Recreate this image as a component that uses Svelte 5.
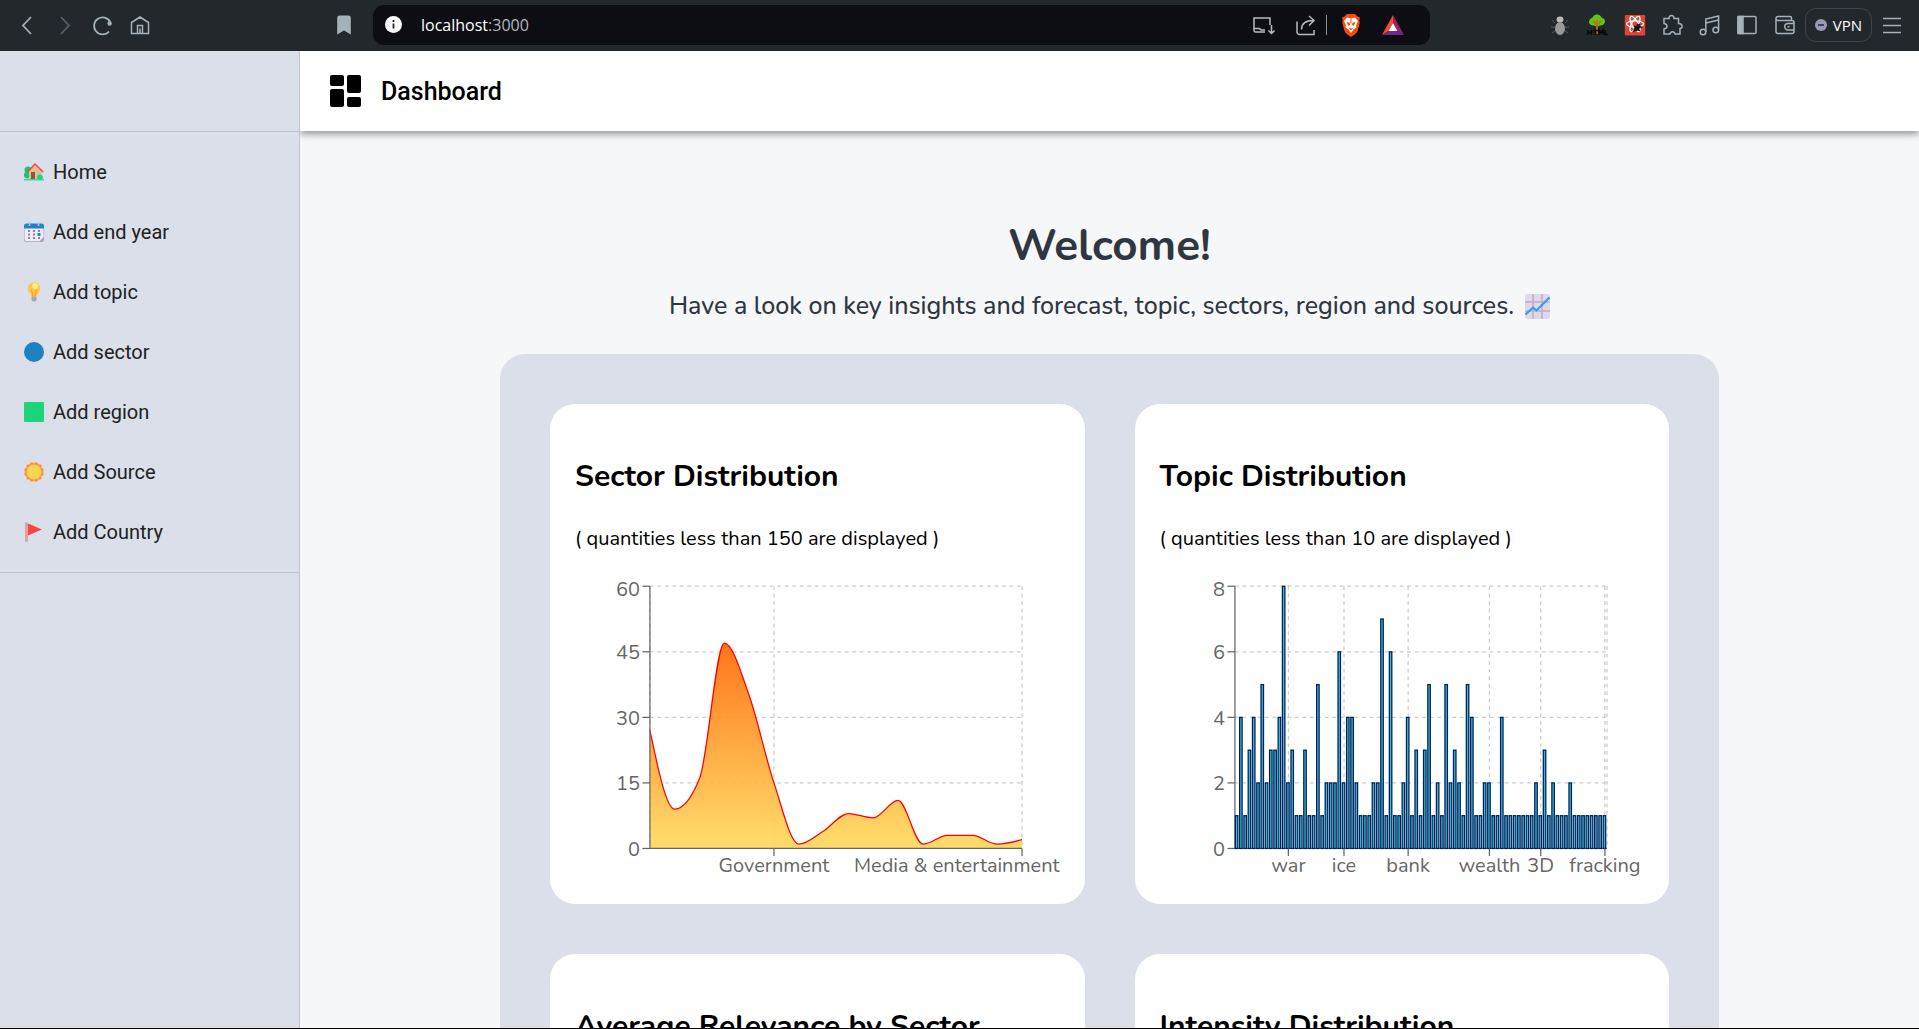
<script>
  const left = 60;
  const top = 5;
  const width = 298;
  const height = 210;
  const bottom = top + height;

  const sectors = [27, 9, 16, 47, 35, 15, 1, 4, 8, 7, 11, 1, 3, 3, 1, 2];
  const topics = [
    1, 4, 1, 3, 4, 2, 5, 2, 3, 3, 4, 8, 2, 3, 1, 1, 3, 1, 1, 5, 1, 2, 2, 2, 6,
    2, 4, 4, 2, 1, 1, 1, 2, 2, 7, 1, 6, 1, 1, 2, 4, 1, 3, 1, 3, 5, 1, 2, 1, 5,
    2, 3, 2, 1, 5, 4, 1, 1, 2, 2, 1, 1, 4, 1, 1, 1, 1, 1, 1, 1, 2, 1, 3, 1, 2,
    1, 1, 1, 2, 1, 1, 1, 1, 1, 1, 1, 1
  ];
  const topicTicks = [
    [12, 'war'], [25, 'ice'], [40, 'bank'], [59, 'wealth'], [71, '3D'], [86, 'fracking']
  ];

  const yFor = (value, max) => bottom - (value / max) * height;

  // Monotone cubic interpolation through the points, as an SVG path.
  function monotone(points) {
    const n = points.length;
    const slopes = points.slice(1).map((p, i) => (p[1] - points[i][1]) / (p[0] - points[i][0]));
    const m = points.map((_, i) => {
      if (i === 0 || i === n - 1) return 0;
      const a = slopes[i - 1];
      const b = slopes[i];
      if (a * b <= 0) return 0;
      return Math.sign(a) * Math.min(Math.abs(a), Math.abs(b), Math.abs(a + b) / 4) * 2;
    });
    m[0] = (3 * slopes[0] - m[1]) / 2;
    m[n - 1] = (3 * slopes[n - 2] - m[n - 2]) / 2;
    let d = `M${points[0].join(',')}`;
    for (let i = 1; i < n; i++) {
      const [x0, y0] = points[i - 1];
      const [x1, y1] = points[i];
      const dx = (x1 - x0) / 3;
      d += `C${x0 + dx},${y0 + dx * m[i - 1]},${x1 - dx},${y1 - dx * m[i]},${x1},${y1}`;
    }
    return d;
  }

  const line = monotone(
    sectors.map((v, i) => [left + (i * width) / (sectors.length - 1), yFor(v, 60)])
  );
  const area = `${line}L${left + width},${bottom}L${left},${bottom}Z`;
  const band = width / topics.length;
  const governmentX = left + width / 3;

  const items = [
    ['home', 'Home'],
    ['calendar', 'Add end year'],
    ['bulb', 'Add topic'],
    ['circle', 'Add sector'],
    ['square', 'Add region'],
    ['sun', 'Add Source'],
    ['flag', 'Add Country']
  ];
  const rays = Array.from({ length: 12 }, (_, i) => {
    const a = (i * Math.PI) / 6 + Math.PI / 12;
    return [10 + 8 * Math.cos(a), 10 + 8 * Math.sin(a)];
  });
</script>

{#snippet yAxis(max, ticks)}
  {#each ticks as t, i}
    <line class="axis" x1={left - 6} x2={left} y1={yFor(t, max)} y2={yFor(t, max)} />
    <text class="label" x="52" y={yFor(t, max) + (i === 0 ? 8 : 6)} text-anchor="end">{t}</text>
  {/each}
  <line class="axis" x1={left} x2={left} y1={top} y2={bottom} />
{/snippet}

{#snippet gridRows(max, ticks)}
  {#each ticks as t}
    <line class="grid" x1={left} x2={left + width} y1={yFor(t, max)} y2={yFor(t, max)} />
  {/each}
{/snippet}

<div class="window">
  <div class="browser">
    <div class="nav">
      <button aria-label="Back"><svg viewBox="0 0 24 24" class="stroke wide"><path d="M16 4 8 12.500l8 8.500" /></svg></button>
      <button aria-label="Forward" class="dim"><svg viewBox="0 0 24 24" class="stroke wide"><path d="m8 4 8 8.500L8 21" /></svg></button>
      <button aria-label="Reload"><svg viewBox="0 0 24 24" class="stroke wide"><path d="M18 18.500A8.500 8.500 0 1 1 19.200 9" /><circle cx="18.600" cy="10.500" r="2.200" class="solid" /></svg></button>
      <button aria-label="Home page"><svg viewBox="0 0 24 24" class="stroke"><path d="M2.500 20.500V9.500L11 4l8.500 5.500v11zM8.500 20.500v-8h5v8M11 20.500v-5" /></svg></button>
      <button aria-label="Bookmark" class="push"><svg viewBox="0 0 24 24"><path fill="#a3b2bb" d="M7.500 2.500h9A2.300 2.300 0 0 1 18.800 4.800V21.500L12 17.500 5.200 21.500V4.800A2.300 2.300 0 0 1 7.500 2.500Z" /></svg></button>
    </div>
    <div class="address">
      <svg class="info" viewBox="0 0 17 17"><circle cx="8.500" cy="8.500" r="8.500" fill="#fff" /><path d="M8.500 7.500v5M8.500 4v2" stroke="#222" stroke-width="1.800" /></svg>
      <span class="url">localhost<span>:3000</span></span>
      <button aria-label="Install" class="grey"><svg viewBox="0 0 24 24" class="stroke"><path d="M13 19H3.500a1.500 1.500 0 0 1-1.500-1.500V5h16v7M2 15.500h5.500l1.500 1.500h4M19.500 12v8M16.500 17.500l3 3 3-3" /></svg></button>
      <button aria-label="Share" class="grey"><svg viewBox="0 0 24 24" class="stroke"><path d="M3 8.500V19a2.500 2.500 0 0 0 2.500 2.500H20V17M7.500 16.500C7.500 11 11 7.500 19.500 7.500M15 3l5 4.500-5 5" /></svg></button>
      <i class="bar"></i>
      <button aria-label="Brave Shields"><svg viewBox="0 0 24 24"><path fill="#fb4a05" d="M8 1h8l2.500 2.500 2.500 1-.8 3 .6 2-2.300 8.500c-.5 2-3.500 4-6.500 6-3-2-6-4-6.500-6L3.200 9.500l.6-2-.8-3 2.500-1z" /><path fill="#fff" d="m8 4.500 4 1 4-1 3 3.500-1.800 4 .3 2.500-3 2L12 20l-2.500-3.500-3-2 .3-2.500L5 8z" /><path fill="#fb4a05" d="m7.500 9 3 .8.500 2.200-1.800.8zM16.500 9l-3 .8-.5 2.200 1.800.8zM9.500 14.500l2.500 1 2.500-1-2.500 3zM11.500 5.500h1v5h-1z" /></svg></button>
      <button aria-label="Rewards" class="last"><svg viewBox="0 0 24 24"><path fill="#ff4a2a" d="M12 2 1 22l6.500-4L12 10z" /><path fill="#9e1f63" d="m12 2 11 20-6.500-4L12 10z" /><path fill="#662d91" d="M1 22h22l-6.500-4h-9z" /><path fill="#fff" d="m12 10 4.500 8h-9z" /></svg></button>
    </div>
    <div class="tools">
      <div class="extensions">
        <button aria-label="Bug"><svg viewBox="0 0 24 24"><path d="M4 7l3 3M20 7l-3 3M3 14h4M21 14h-4M4 20l3-2M20 20l-3-2" stroke="#555c60" /><ellipse cx="12" cy="6.500" rx="3.500" ry="3" fill="#bbb" /><ellipse cx="12" cy="15.500" rx="5" ry="6.500" fill="#999" /></svg></button>
        <button aria-label="HTML Tree"><svg viewBox="0 0 24 24"><path fill="#63c414" d="M12 1.500c2.500 0 4 1.500 4.500 3 2 .5 4 2.500 3.500 4.500s-3 4-5 3.500c-2 1-4 1-6 0-2 .5-5-1.500-5-3.500s1.500-4 3.500-4.500C8 3 9.500 1.500 12 1.500Z" /><path d="M12 21V7M12 12 8 8M12 12l4-4" stroke="#b5741f" stroke-width="1.800" fill="none" /><path d="M3 17v5M6.500 17v5M3 19.500h3.500M8 17.500h5M10.500 17v5M14 22v-5l2 3 2-3v5M20 17v4.500h3" stroke="#080808" stroke-width="1.600" fill="none" /></svg></button>
        <button aria-label="React tools"><svg viewBox="0 0 24 24"><rect x="1.800" y="2" width="20.400" height="20.400" rx="1" fill="#df4537" /><g fill="none" stroke="#fff" stroke-width="1.300"><ellipse cx="12" cy="11" rx="8.500" ry="3.200" /><ellipse cx="12" cy="11" rx="8.500" ry="3.200" transform="rotate(60 12 11)" /><ellipse cx="12" cy="11" rx="8.500" ry="3.200" transform="rotate(120 12 11)" /></g><path d="m10 19 7-8M11 13l6 5M14 11l5 4" stroke="#1b1b1b" stroke-width="1.600" /><ellipse cx="14" cy="15" rx="2.500" ry="3.500" transform="rotate(40 14 15)" fill="#1b1b1b" /></svg></button>
        <button aria-label="Extensions"><svg viewBox="0 0 24 24" class="stroke"><path d="M4 5.500h5C8.500 1.500 14.500 1.500 14 5.500h4.500v5c4.500 0 4.500 5 1.500 5v5.500h-5c-.5-3-4.500-3-5 0H4v-5c4-.5 4-5 0-5.500z" /></svg></button>
        <button aria-label="Media"><svg viewBox="0 0 24 24" class="stroke"><circle cx="5" cy="19" r="2.800" /><circle cx="17.800" cy="17" r="2.800" /><path d="M7.800 19V6L20.600 3v14M7.800 10l12.800-3" /></svg></button>
        <button aria-label="Sidebar"><svg viewBox="0 0 24 24" class="stroke"><rect x="3" y="3.500" width="18" height="17" rx="1" /><path fill="#a3b2bb" d="M3 3.500h5v17H3z" /></svg></button>
        <button aria-label="Wallet"><svg viewBox="0 0 24 24" class="stroke"><path d="M18.500 7.500V5A1.500 1.500 0 0 0 17 3.500H5a2 2 0 0 0 0 4h14a2 2 0 0 1 2 2v9a2 2 0 0 1-2 2H5a2 2 0 0 1-2-2v-13M21 10.500h-6a3.200 3.200 0 0 0 0 6.500h6M14.500 13.800h2" /></svg></button>
      </div>
      <button class="vpn"><svg viewBox="0 0 12 12"><circle cx="6" cy="6" r="6" fill="#9a99b3" /><path d="M3 6h6" stroke="#23272b" stroke-width="1.500" /></svg>VPN</button>
      <button aria-label="Menu"><svg viewBox="0 0 24 24" class="stroke"><path d="M3 5.500h18M3 12.500h18M3 19.500h18" /></svg></button>
    </div>
  </div>

  <div class="app">
    <aside>
      <div class="brand"></div>
      <nav>
        {#each items as [icon, label]}
          <a href="#{icon}">
            <svg viewBox="0 0 20 20">
              {#if icon === 'home'}
                <circle cx="4" cy="8" r="3.500" fill="#18c673" /><circle cx="3.500" cy="13" r="3.500" fill="#18c673" />
                <path fill="#eebd7d" d="M5 9l6-6 7 6.500V18H5z" />
                <path fill="none" stroke="#f5454c" stroke-width="1.500" d="M3.500 10 11 2l8.200 8" />
                <path fill="#7f5a4d" d="M7 10h4v8H7z" /><path fill="#8ccbf5" d="M13 10h3.500v4H13z" />
                <circle cx="16" cy="15.500" r="2.800" fill="#18d36f" /><path fill="#35dba0" d="M0 17h20v1.500H0z" />
              {:else if icon === 'calendar'}
                <rect y="2" width="20" height="18" rx="2.500" fill="#aaa0b5" /><path fill="#f0ebf7" d="M.5 5h19v10l-4 4.200H3A2.500 2.500 0 0 1 .5 17z" />
                <path fill="#1b86cf" d="M0 6.500V4a2.500 2.500 0 0 1 2.500-2.500h15A2.500 2.500 0 0 1 20 4v2.500z" />
                <path stroke="#c9c4d4" stroke-width="1.500" d="M5.500 0v4M14.500 0v4" />
                <path stroke="#8c8399" stroke-width="2" stroke-dasharray="2 3" d="M4 9h12M4 12.500h7M4 16h12" /><path fill="#1b86cf" d="M13.500 11h3v3h-3z" />
              {:else if icon === 'bulb'}
                <path fill="#fbc64a" d="M10 .3a6 6 0 0 1 6.200 6.200c0 3.500-3 4.500-3.500 8.500H7.300C6.800 11 3.800 10 3.800 6.500A6 6 0 0 1 10 .3Z" />
                <circle cx="11" cy="4" r="3" fill="#fdf07a" /><path d="m7.500 8 1.500 7M12.500 8 11 15" stroke="#f39c3c" /><path fill="#aaa4b2" d="M7.500 15h5v3l-1.500 1.500H9L7.500 18z" />
              {:else if icon === 'circle'}
                <circle cx="10" cy="10" r="10" fill="#1c82c2" />
              {:else if icon === 'square'}
                <rect width="20" height="20" rx="1" fill="#1bd57a" />
              {:else if icon === 'sun'}
                {#each rays as [cx, cy]}<circle {cx} {cy} r="2" fill="#ff8f3f" />{/each}
                <circle cx="10" cy="10" r="8.500" fill="#ff8f3f" /><circle cx="10" cy="10" r="7.500" fill="#f9d44f" />
              {:else}
                <rect x="1" width="3" height="20" rx="1.500" fill="#e0a39c" /><path fill="#fb4545" d="M4 1.500 18 7.500 4 13.500z" />
              {/if}
            </svg>
            {label}
          </a>
        {/each}
      </nav>
    </aside>

    <div class="content">
      <header>
        <svg viewBox="0 0 31 32"><rect width="14" height="11" rx="2" /><rect y="14" width="14" height="18" rx="2" /><rect x="17" width="14" height="18" rx="2" /><rect x="17" y="22" width="14" height="10" rx="2" /></svg>
        <span>Dashboard</span>
      </header>
      <main>
        <h1>Welcome!</h1>
        <p class="lead">
          Have a look on key insights and forecast, topic, sectors, region and sources.
          <svg viewBox="0 0 25 25"><rect width="25" height="25" rx="3" fill="#ded8ea" /><path d="M8 0v25M17 0v25M0 8h25M0 17h25" stroke="#b9afc8" stroke-width="1.500" /><path d="m.5 20.500 7.500-7 3.500 3L24.500 3.500" fill="none" stroke="#2d9cea" stroke-width="2" /></svg>
        </p>

        <section class="panel">
          <article>
            <h2>Sector Distribution</h2>
            <p>( quantities less than 150 are displayed )</p>
            <svg class="chart" viewBox="0 0 388 250" role="img" aria-label="Sector distribution">
              <defs>
                <linearGradient id="heat" x1="0" y1="0" x2="0" y2="1">
                  <stop offset="0" stop-color="#ff6600" />
                  <stop offset="0.950" stop-color="#ffd558" />
                </linearGradient>
              </defs>
              {@render gridRows(60, [60, 45, 30, 15, 0])}
              {#each [left, governmentX, left + width] as x}
                <line class="grid" x1={x} x2={x} y1={top} y2={bottom} />
              {/each}
              <path d={area} fill="url(#heat)" fill-opacity="0.900" />
              <path d={line} fill="none" stroke="#f00" />
              {@render yAxis(60, [60, 45, 30, 15, 0])}
              <line class="axis" x1={left} x2={left + width} y1={bottom} y2={bottom} />
              <line class="axis" x1={governmentX} x2={governmentX} y1={bottom} y2={bottom + 6} />
              <line class="axis" x1={left + width} x2={left + width} y1={bottom} y2={bottom + 6} />
              <text class="label" x={governmentX} y="234" text-anchor="middle">Government</text>
              <text class="label" x="388" y="234" text-anchor="end">Media &amp; entertainment</text>
            </svg>
          </article>

          <article>
            <h2>Topic Distribution</h2>
            <p>( quantities less than 10 are displayed )</p>
            <svg class="chart" viewBox="0 0 388 250" role="img" aria-label="Topic distribution">
              {@render gridRows(8, [8, 6, 4, 2, 0])}
              {#each topicTicks as [index]}
                <line class="grid" x1={left + (index + 0.5) * band} x2={left + (index + 0.5) * band} y1={top} y2={bottom} />
              {/each}
              <line class="grid" x1={left + width} x2={left + width} y1={top} y2={bottom} />
              {@render yAxis(8, [8, 6, 4, 2, 0])}
              <line class="axis" x1={left} x2={left + width} y1={bottom} y2={bottom} />
              {#each topics as value, i}
                <rect class="column" x={left + i * band + band / 10} y={yFor(value, 8)} width="2" height={bottom - yFor(value, 8)} />
              {/each}
              {#each topicTicks as [index, name]}
                <line class="axis" x1={left + (index + 0.5) * band} x2={left + (index + 0.5) * band} y1={bottom} y2={bottom + 6} />
                <text class="label" x={left + (index + 0.5) * band} y="234" text-anchor="middle">{name}</text>
              {/each}
            </svg>
          </article>

          <article><h2>Average Relevance by Sector</h2></article>
          <article><h2>Intensity Distribution</h2></article>
        </section>
      </main>
    </div>
  </div>
</div>

<style>
  :global(body) { overflow: hidden; }
  * { box-sizing: border-box; }
  .window {
    display: flex;
    flex-direction: column;
    height: 100vh;
    overflow: hidden;
    border-bottom: 1px solid #000;
    font-family: 'Nunito', 'Open Sans', sans-serif;
  }
  button {
    padding: 0;
    border: 0;
    background: none;
    color: #a3b2bb;
    font: inherit;
  }
  svg { display: block; flex: none; }
  .browser {
    flex: none;
    display: flex;
    align-items: center;
    height: 51px;
    padding-bottom: 2px;
    background: #23282c;
    font-family: 'Open Sans', sans-serif;
  }
  .browser button svg { width: 24px; height: 24px; }
  .stroke { fill: none; stroke: currentColor; stroke-width: 1.5; }
  .wide { stroke-width: 1.8; }
  .solid { fill: currentColor; stroke: none; }
  .dim { color: #566067; }
  .grey { color: #b5bcbb; }
  .nav {
    flex: none;
    display: flex;
    gap: 14px;
    width: 373px;
    padding: 0 17px 0 15px;
  }
  .push { margin-left: auto; }
  .address {
    flex: 1;
    display: flex;
    align-items: center;
    height: 40px;
    padding: 0 25px 0 12px;
    border-radius: 11px;
    background: #0d0e13;
  }
  .info { width: 17px; height: 17px; }
  .url { flex: 1; margin-left: 19px; color: #fff; font-size: 16px; }
  .url span { color: #b4b8bc; }
  .address button + button { margin-left: 18px; }
  .bar { width: 1px; height: 20px; margin: 0 12px 0 8px; background: #8b9094; }
  .tools {
    flex: none;
    display: flex;
    align-items: center;
    width: 489px;
    padding: 0 15px 0 118px;
  }
  .extensions { display: flex; flex: 1; justify-content: space-between; }
  button.vpn {
    display: flex;
    align-items: center;
    gap: 6px;
    height: 34px;
    margin: 0 8px 0 8px;
    padding: 0 9px;
    border: 1px solid #3d474b;
    border-radius: 11px;
    color: #fff;
    font-size: 15px;
  }
  button.vpn svg { width: 12px; height: 12px; }

  .app { flex: 1; display: flex; min-height: 0; }
  aside {
    flex: none;
    width: 300px;
    border-right: 1px solid #bdc3d1;
    background: #dbdfea;
  }
  .brand { height: 80px; }
  nav {
    padding: 10px 0;
    border-top: 1px solid #bdc3d1;
    border-bottom: 1px solid #bdc3d1;
  }
  nav a {
    display: flex;
    align-items: center;
    gap: 9px;
    height: 60px;
    padding-left: 24px;
    color: #212121;
    font: 20px/30px Roboto, sans-serif;
    text-decoration: none;
  }
  nav svg { width: 20px; height: 20px; }

  .content {
    flex: 1;
    min-width: 0;
    overflow: hidden;
    background: #f6f7f9;
  }
  header {
    display: flex;
    align-items: center;
    gap: 20px;
    height: 80px;
    padding-left: 30px;
    background: #fff;
    box-shadow: 0 3px 5px -1px #0003, 0 5px 6px #00000024, 0 1px 12px #0000001f;
    font: 500 25px/40px Roboto, sans-serif;
  }
  header svg { width: 31px; height: 32px; }
  header span { padding-top: 2px; }
  h1 {
    margin: 85px 0 13px;
    color: #2f3640;
    font-size: 44px;
    font-weight: 700;
    line-height: 60px;
    text-align: center;
  }
  .lead {
    display: flex;
    justify-content: center;
    align-items: center;
    gap: 11px;
    margin: 0 0 31px;
    color: #2f3640;
    font-size: 25px;
    font-weight: 500;
    line-height: 34px;
  }
  .lead svg { width: 25px; height: 25px; }
  .panel {
    display: grid;
    grid-template-columns: 1fr 1fr;
    gap: 50px;
    width: calc(100% - 400px);
    margin: 0 auto;
    padding: 50px;
    border-radius: 25px;
    background: #dbdfea;
  }
  article {
    min-height: 500px;
    padding: 52px 25px 11px;
    border-radius: 25px;
    background: #fff;
  }
  h2 {
    margin: 0 0 28px;
    font-size: 30px;
    font-weight: 700;
    line-height: 41px;
  }
  article p { margin: 0 0 27px; font-size: 20px; line-height: 28px; }
  .chart { width: 100%; height: auto; overflow: visible; }
  .grid { stroke: #ccc; stroke-dasharray: 3 3; }
  .axis { stroke: #666; }
  .label { fill: #666; font-size: 16px; }
  .column { fill: #22c3d0; stroke: #0b1a5c; }
</style>
